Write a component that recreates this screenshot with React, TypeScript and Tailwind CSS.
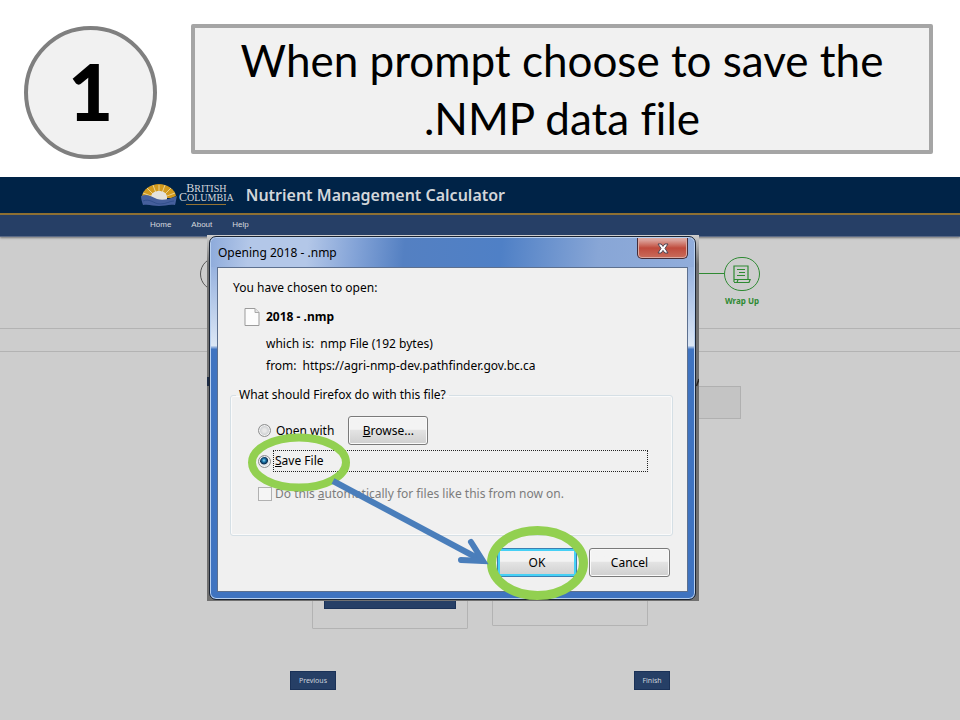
import React from 'react';

function BCLogo() {
  return (
    <div className="flex items-center gap-[2px]">
      <svg viewBox="0 0 36 22" className="h-[22px] w-9" aria-hidden="true">
        <path d="M1 12 C2 5 10 0 18 0 S34 5 35 12 L30 14 H6 Z" fill="#d29a1d" />
        <g stroke="#f0dfb0" strokeWidth="0.8">
          <path d="M18 9 V1M15 9 L12 1M21 9 L24 1M12 10 L6 4M24 10 L30 4M10 12 L2 9M26 12 L34 9" />
        </g>
        <path d="M10 13 C10 9 14 7 18 7 S26 9 26 13 V16 H10 Z" fill="#e4e2dc" />
        <path d="M0 12 C7 9 11 13 16 15 C22 17 28 15 36 12 C35 15 35 18 34 21 C28 20 24 22 18 22 C12 22 8 20 2 21 C1 18 0 15 0 12 Z" fill="#455f9c" />
        <path d="M2 17 C9 14 13 20 19 20 C25 20 29 17 33 17" stroke="#2c4a86" strokeWidth="0.8" fill="none" />
      </svg>
      <div className="flex flex-col items-center font-['Liberation_Serif',serif] text-[#d5d8dc]">
        <span className="text-[12px] leading-[9px]">
          B<span className="text-[10px]">RITISH</span>
        </span>
        <span className="text-[12px] leading-[9px]">
          C<span className="text-[10px]">OLUMBIA</span>
        </span>
        <span className="mt-[2px] h-px w-10 bg-[#967433]" />
      </div>
    </div>
  );
}

function SlideHeader() {
  return (
    <header className="flex items-start gap-[34px] bg-white pt-6 pr-[27px] pb-[18px] pl-6">
      <div className="mt-[2px] flex size-[133px] shrink-0 items-center justify-center rounded-full border-4 border-[#7f7f7f] bg-[#f1f1f1] pb-1 font-['Lato',sans-serif] text-[78px] leading-none font-black text-black">
        1
      </div>
      <h1 className="flex h-[130px] flex-1 items-center justify-center rounded-[2px] border-4 border-[#a5a5a5] bg-[#f1f1f1] px-10 text-center font-['Lato',sans-serif] text-[44px] leading-[58px] text-black [font-variant-ligatures:none]">
        When prompt choose to save the
        <br />
        .NMP data file
      </h1>
    </header>
  );
}

function SiteHeader() {
  return (
    <div>
      <div className="flex h-[38px] items-center gap-3 border-b-2 border-[#8f7031] bg-[#002347] pb-px pl-[141px]">
        <BCLogo />
        <h2 className="font-['Noto_Sans',sans-serif] text-[16px] leading-5 font-semibold text-[#d3d6da]">
          Nutrient Management Calculator
        </h2>
      </div>
      <nav className="flex h-[22px] items-center gap-5 border-b border-[#5b6a86] bg-[#263f66] pb-[2px] pl-[150px] font-['Liberation_Sans',sans-serif] text-[8px] leading-[10px] text-[#d6d9de] shadow-[0_1px_2px_#777]">
        <a href="#home">Home</a>
        <a href="#about">About</a>
        <a href="#help">Help</a>
      </nav>
    </div>
  );
}

function Step({ label, active }: { label: string; active?: boolean }) {
  return (
    <div className={active ? 'flex w-9 flex-col items-center text-[#2f8a33]' : 'flex w-9 flex-col items-center text-[#555555]'}>
      <div className="flex h-[34px] w-9 items-center justify-center rounded-full border border-current">
        {active && (
          <svg viewBox="0 0 18 19" className="h-[19px] w-[18px]" fill="none" stroke="currentColor" strokeWidth="1.2" aria-hidden="true">
            <path d="M1 17 V1 H15 V14M4 4.5 H12M6 7.5 H12M4 10.5 H12M1 17.5 H16 L17.2 14.5 H5 L4 17.5M1 14.5 H5" />
          </svg>
        )}
      </div>
      <span className="mt-1 font-['Noto_Sans',sans-serif] text-[8px] leading-[11px] font-bold whitespace-nowrap">{label}</span>
    </div>
  );
}

const navButton =
  "h-[19px] border border-[#1a3157] bg-[#263f66] font-['Noto_Sans',sans-serif] text-[7px] leading-[10px] text-[#ccd2dc]";

function SitePage() {
  return (
    <div className="flex flex-col">
      <SiteHeader />
      <div className="mx-auto flex w-[560px] items-start pt-5">
        <Step label="Farm" />
        <div className="mt-4 h-px flex-1 bg-[#2f8a33]" />
        <Step label="Wrap Up" active />
      </div>
      <div className="mt-[22px] h-6 border-y border-[#b3b3b3]" />
      <div className="mx-auto mt-[34px] h-[33px] w-[522px] border border-[#b0b0b0] bg-[#c4c4c4]" />
      <div className="mx-auto mt-[82px] flex w-[336px] items-start justify-between">
        <div className="flex h-[128px] w-[156px] flex-col justify-end rounded-[1px] border border-[#b3b3b3] px-[11px] pb-[19px]">
          <div className="h-6 w-full border border-[#1a3157] bg-[#263f66]" />
        </div>
        <div className="h-[125px] w-[156px] rounded-[1px] border border-[#b3b3b3]" />
      </div>
      <div className="mx-auto mt-[42px] flex w-[380px] justify-between">
        <button type="button" className={`${navButton} w-[46px]`}>Previous</button>
        <button type="button" className={`${navButton} w-9`}>Finish</button>
      </div>
    </div>
  );
}

const dialogButton =
  'rounded-[3px] border bg-linear-to-b from-[#f3f3f3] from-45% via-[#e3e3e3] via-50% to-[#cfcfcf] text-black';
const radio =
  'size-[13px] shrink-0 appearance-none rounded-full border border-[#8e8f8f] shadow-[inset_0_0_0_1px_#f4f4f4] bg-[radial-gradient(circle,#e8e8e8_20%,#c5c8cb_70%)] checked:bg-[radial-gradient(circle_at_45%_40%,#8fdcf5_0,#1b74a8_20%,#0b2b4c_40%,#e0e3e6_50%)]';

function OpenDialog() {
  return (
    <div
      role="dialog"
      aria-labelledby="dialog-title"
      className="absolute top-[58px] left-[207px] w-[492px] bg-linear-to-b from-[#cfcfcf] to-[#707070] to-8% pt-px pr-[3px] pb-px pl-[2px] font-['Noto_Sans','Open_Sans',sans-serif] text-[12px] leading-4 text-black"
    >
      <div className="rounded-[7px] border border-[#1b2433] bg-linear-to-b from-[#8daadb] from-5% via-[#dce7f5] via-30% to-[#3f73c0] to-31% px-[7px] pb-[7px] shadow-[inset_0_0_0_1px_#b8d0f0]">
        <div className="-mx-[6px] mt-px flex h-[29px] items-start justify-between rounded-t-[6px] bg-[linear-gradient(95deg,#8eabdb_0,#b3c7e8_8%,#b3c7e8_20%,#83a3d7_30%,#5480c2_40%,#4f80c6_60%,#88a6d6_80%,#91addb_100%)] pr-[6px] pl-[7px]">
          <h3 id="dialog-title" className="pt-[7px]">Opening 2018 - .nmp</h3>
          <button
            type="button"
            aria-label="Close"
            className="flex h-[21px] w-[51px] items-center justify-center rounded-b-[5px] border border-t-0 border-[#432c38] bg-linear-to-b from-[#dba39c] from-10% via-[#bf4a3c] via-50% to-[#c96c5b] shadow-[inset_0_0_0_1px_#dca9a1]"
          >
            <svg viewBox="0 0 12 11" className="h-[11px] w-3" aria-hidden="true">
              <path d="M1 1 H4.2 L6 3.4 L7.8 1 H11 L8 5.4 L11 10 H7.8 L6 7.4 L4.2 10 H1 L4 5.4 Z" fill="#fff" stroke="#4d4554" />
            </svg>
          </button>
        </div>
        <form className="border border-[#5d708f] bg-[#f0f0f0] px-3 pt-3 pb-[14px]" onSubmit={(e) => e.preventDefault()}>
          <p className="pl-[3px]">You have chosen to open:</p>
          <div className="mt-3 flex h-[18px] items-center gap-[6px] pl-[14px]">
            <svg viewBox="0 0 16 18" className="h-[18px] w-4" aria-hidden="true">
              <path d="M1 .5 H11 L15 4.5 V17.5 H1 Z" fill="#fcfcfc" stroke="#9b9b9b" />
              <path d="M11 .5 V4.5 H15" fill="#e4e4e4" stroke="#a8a8a8" />
            </svg>
            <strong className="font-bold">2018 - .nmp</strong>
          </div>
          <dl className="mt-[7px] pl-9">
            <div className="flex gap-[6px] py-[3px]">
              <dt>which is:</dt>
              <dd>nmp File (192 bytes)</dd>
            </div>
            <div className="flex gap-[6px] py-[3px]">
              <dt>from:</dt>
              <dd>https://agri-nmp-dev.pathfinder.gov.bc.ca</dd>
            </div>
          </dl>
          <fieldset className="mt-[10px] mr-[2px] h-[149px] rounded-[3px] border border-[#d5dfe5] pr-6 pl-[27px] shadow-[inset_0_0_0_1px_#fafafa]">
            <legend className="-ml-[22px] px-[3px]">What should Firefox do with this file?</legend>
            <div className="mt-[13px] flex h-[29px] items-center">
              <input type="radio" name="action" id="open-with" className={radio} />
              <label htmlFor="open-with" className="ml-[5px]">Open with</label>
              <button type="button" className={`${dialogButton} ml-[14px] h-[29px] w-20 border-[#7a7a7a] shadow-[inset_0_0_0_1px_#fafafa]`}>
                <u>B</u>rowse...
              </button>
            </div>
            <div className="mt-[5px] flex items-center gap-[2px]">
              <input type="radio" name="action" id="save-file" defaultChecked className={radio} />
              <label htmlFor="save-file" className="h-[22px] flex-1 border border-dotted border-[#222222] pl-px leading-5">
                <u>S</u>ave File
              </label>
            </div>
            <div className="mt-[14px] flex h-4 items-center gap-[3px]">
              <input type="checkbox" id="auto" disabled className="size-[14px] shrink-0 appearance-none border border-[#b1b1b1] bg-[#f5f5f5]" />
              <label htmlFor="auto" className="text-[#7c7c7c]">
                Do this <u>a</u>utomatically for files like this from now on.
              </label>
            </div>
          </fieldset>
          <div className="mt-3 flex justify-end gap-3 pr-[5px]">
            <button type="submit" className={`${dialogButton} h-[29px] w-20 border-[#3c7fb1] shadow-[inset_0_0_0_2px_#46d0f5]`}>OK</button>
            <button type="button" className={`${dialogButton} h-[29px] w-[81px] border-[#7a7a7a] shadow-[inset_0_0_0_1px_#fafafa]`}>Cancel</button>
          </div>
        </form>
      </div>
      <svg viewBox="0 0 492 366" className="pointer-events-none absolute top-0 left-0 h-[366px] w-[492px]" fill="none" aria-hidden="true">
        <path d="M1 142 V151" stroke="#1d2b44" strokeWidth="2" />
        <path d="M489.5 151 L492 144" stroke="#2a2623" strokeWidth="1.5" />
        <ellipse cx="92" cy="227.5" rx="47" ry="25" stroke="#92d050" strokeWidth="8" />
        <ellipse cx="330.5" cy="328" rx="46" ry="32.5" stroke="#92d050" strokeWidth="9" />
        <path d="M126 246 L276 326" stroke="#4a7ebb" strokeWidth="6" />
        <path d="M264 307 L276 326 L254 325" stroke="#4a7ebb" strokeWidth="6" strokeLinecap="round" />
      </svg>
    </div>
  );
}

export default function App() {
  return (
    <div className="flex min-h-screen flex-col bg-[#cdcdcd]">
      <SlideHeader />
      <main className="relative flex-1">
        <SitePage />
        <OpenDialog />
      </main>
    </div>
  );
}
